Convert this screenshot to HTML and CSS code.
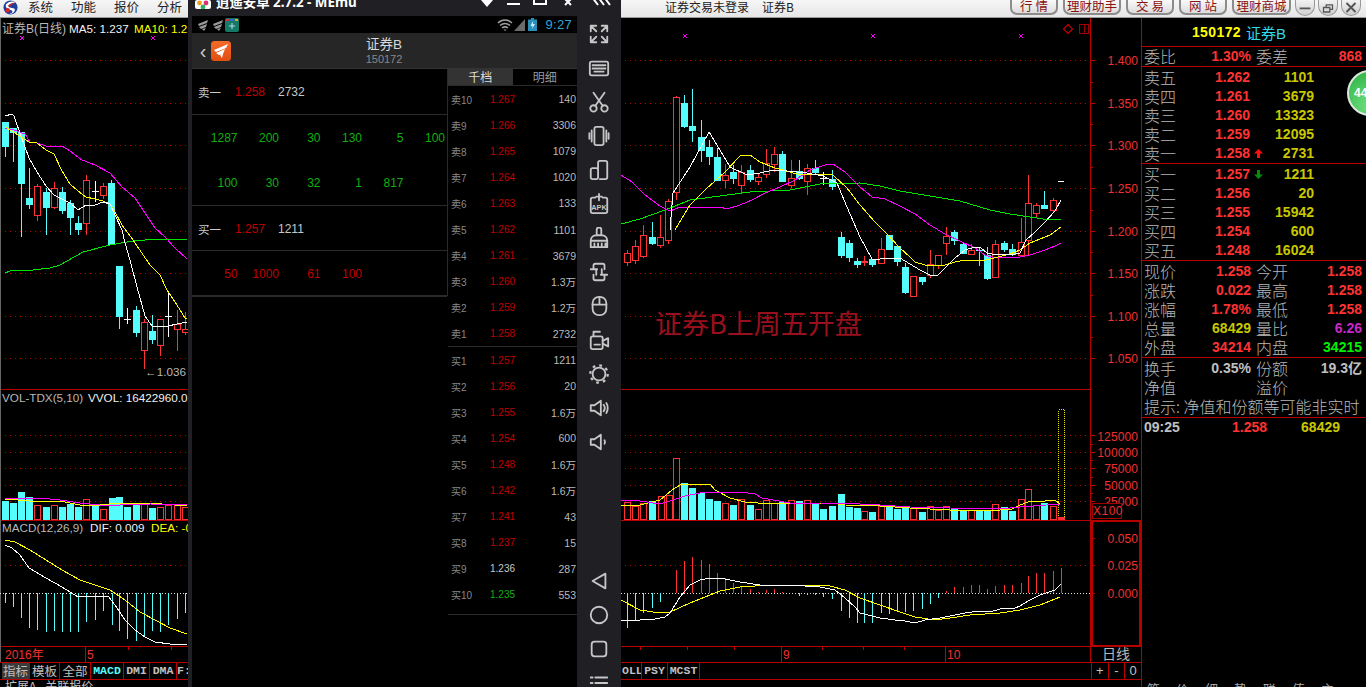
FILE: index.html
```html
<!DOCTYPE html>
<html lang="zh-CN">
<head>
<meta charset="utf-8">
<title>证券B</title>
<link rel="stylesheet" href="styles.css">
</head>
<body>
<div class="app">
  <header class="menubar">
    <div class="menu-left">
      <svg class="logo" viewBox="0 0 16 16"><circle cx="8" cy="8" r="7.5" fill="#1d3f9e"/><path d="M3 5c3-4 8-4 10-2-3 0-6 1-7 3s3 2 6 3c2 2-1 6-5 6 3-1 4-3 2-4S2 9 3 5z" fill="#fff"/><path d="M5 7c1-2 5-4 8-4-2 1-4 2-5 3z" fill="#e02020"/><circle cx="5" cy="11" r="2.4" fill="#e02020"/></svg>
      <span class="menu-item">系统</span><span class="menu-item">功能</span><span class="menu-item">报价</span><span class="menu-item">分析</span>
    </div>
    <div class="menu-title"><span>证券交易未登录</span><span>证券B</span></div>
    <nav class="menu-btns">
      <span class="mbtn w48">行 情</span><span class="mbtn w58">理财助手</span><span class="mbtn w48">交 易</span><span class="mbtn w48">网 站</span><span class="mbtn w59">理财商城</span>
    </nav>
    <div class="win-btns">
      <span class="wbtn"><svg viewBox="0 0 20 16"><path d="M4 9h12" stroke="#555" stroke-width="2"/></svg></span>
      <span class="wbtn"><svg viewBox="0 0 20 16"><path d="M5 8h7v5H5zM8 8V5h7v5h-3" fill="none" stroke="#555" stroke-width="1.4"/></svg></span>
      <span class="wbtn"><svg viewBox="0 0 20 16"><path d="M5 3l10 10M15 3L5 13" stroke="#555" stroke-width="2.2"/></svg></span>
    </div>
  </header>

  <div class="workspace">
    <main class="charts">
      <svg id="chart" class="chart-svg" viewBox="0 18 1141 644" width="1141" height="644">
        <g id="grid"></g>
        <g id="plots"></g>
        <g class="t-gray">
          <text x="2" y="33" class="t-cjk">证券B(日线)</text>
          <text x="2" y="402">VOL-TDX(5,10)</text>
          <text x="2" y="532">MACD(12,26,9)</text>
          <text x="145" y="376">←1.036</text>
        </g>
        <g class="t-white">
          <text x="69" y="33">MA5: 1.237</text>
          <text x="88" y="402">VVOL: 16422960.0</text>
          <text x="90" y="532">DIF: 0.009</text>
        </g>
        <g class="t-yellow">
          <text x="134" y="33">MA10: 1.2</text>
          <text x="151" y="532">DEA: -0</text>
        </g>
        <g class="t-axis">
          <text x="1138" y="65">1.400</text><text x="1138" y="108">1.350</text><text x="1138" y="150">1.300</text><text x="1138" y="193">1.250</text>
          <text x="1138" y="236">1.200</text><text x="1138" y="278">1.150</text><text x="1138" y="321">1.100</text><text x="1138" y="363">1.050</text>
          <text x="1138" y="441">125000</text><text x="1138" y="457">100000</text><text x="1138" y="473">75000</text><text x="1138" y="490">50000</text><text x="1138" y="506">25000</text>
          <text x="1138" y="543">0.050</text><text x="1138" y="570">0.025</text><text x="1138" y="598">0.000</text>
        </g>
        <rect class="x100-box" x="1092.5" y="503.5" width="29" height="15"/>
        <text class="t-axis-start" x="1093" y="515">X100</text>
        <g class="t-date">
          <text x="5" y="659">2016年</text><text x="87" y="659">5</text><text x="783" y="659">9</text><text x="947" y="659">10</text>
        </g>
        <text class="t-period" x="1116" y="659">日线</text>
        <text class="t-note" x="655" y="334">证券B上周五开盘</text>
        <path class="mark" d="M1068 24.500l4.500 4.500-4.500 4.500-4.500-4.500zM1079.500 24.500h9v9h-9zM1084.500 24.500v9"/>
      </svg>
      <div class="tabstrip">
        <div class="tabs-left">
          <span class="tab cjk active w28">指标</span><span class="tab cjk w30">模板</span><span class="tab cjk w31">全部</span><span class="tab mono cyan w33">MACD</span><span class="tab mono w26">DMI</span><span class="tab mono w27">DMA</span><span class="tab mono w13">F:</span>
        </div>
        <div class="tabs-main">
          <span class="tab mono w20">OLL</span><span class="tab mono w26">PSY</span><span class="tab mono w32">MCST</span>
        </div>
        <div class="tabs-zoom"><span class="zbtn">+</span><span class="zbtn">-</span><span class="zbtn">0</span></div>
      </div>
      <div class="subtabs"><span>扩展A</span><span>关联报价</span></div>
    </main>

    <aside class="panel">
      <div class="p-head"><span class="yellow">150172</span><span class="cyan-t">证券B</span></div>
      <div class="p-ratio">
        <span class="lab">委比</span><span class="num red">1.30%</span><span class="lab">委差</span><span class="num red">868</span>
      </div>
      <div class="book">
        <div class="b-row"><span class="lab">卖五</span><span class="num red">1.262</span><span></span><span class="num olive">1101</span></div>
        <div class="b-row"><span class="lab">卖四</span><span class="num red">1.261</span><span></span><span class="num olive">3679</span></div>
        <div class="b-row"><span class="lab">卖三</span><span class="num red">1.260</span><span></span><span class="num olive">13323</span></div>
        <div class="b-row"><span class="lab">卖二</span><span class="num red">1.259</span><span></span><span class="num olive">12095</span></div>
        <div class="b-row"><span class="lab">卖一</span><span class="num red">1.258</span><svg class="arrow" viewBox="0 0 9 9"><path d="M4.500 0L9 4.500H6V9H3V4.500H0z" fill="#ff1010"/></svg><span class="num olive">2731</span></div>
      </div>
      <div class="book">
        <div class="b-row"><span class="lab">买一</span><span class="num red">1.257</span><svg class="arrow" viewBox="0 0 9 9"><path d="M4.500 9L9 4.500H6V0H3V4.500H0z" fill="#0a8a0a"/></svg><span class="num olive">1211</span></div>
        <div class="b-row"><span class="lab">买二</span><span class="num red">1.256</span><span></span><span class="num olive">20</span></div>
        <div class="b-row"><span class="lab">买三</span><span class="num red">1.255</span><span></span><span class="num olive">15942</span></div>
        <div class="b-row"><span class="lab">买四</span><span class="num red">1.254</span><span></span><span class="num olive">600</span></div>
        <div class="b-row"><span class="lab">买五</span><span class="num red">1.248</span><span></span><span class="num olive">16024</span></div>
      </div>
      <div class="book">
        <div class="s-row"><span class="lab">现价</span><span class="num red">1.258</span><span class="lab">今开</span><span class="num red">1.258</span></div>
        <div class="s-row"><span class="lab">涨跌</span><span class="num red">0.022</span><span class="lab">最高</span><span class="num red">1.258</span></div>
        <div class="s-row"><span class="lab">涨幅</span><span class="num red">1.78%</span><span class="lab">最低</span><span class="num red">1.258</span></div>
        <div class="s-row"><span class="lab">总量</span><span class="num olive">68429</span><span class="lab">量比</span><span class="num purple">6.26</span></div>
        <div class="s-row"><span class="lab">外盘</span><span class="num red">34214</span><span class="lab">内盘</span><span class="num green">34215</span></div>
      </div>
      <div class="book extra">
        <div class="s-row"><span class="lab">换手</span><span class="num gray">0.35%</span><span class="lab">份额</span><span class="num gray">19.3亿</span></div>
        <div class="s-row"><span class="lab">净值</span><span></span><span class="lab">溢价</span><span></span></div>
        <div class="tip">提示: 净值和份额等可能非实时</div>
      </div>
      <div class="t-row"><span class="num gray">09:25</span><span class="num red">1.258</span><span class="num olive">68429</span></div>
      <div class="p-tabs"><span>笔</span><span>价</span><span>细</span><span>势</span><span>联</span><span>值</span><span>主</span></div>
      <div class="bubble">44</div>
    </aside>
  </div>

  <section class="emu">
    <div class="emu-title">
      <svg class="emu-ico" viewBox="0 0 16 9"><rect width="16" height="9" rx="2" fill="#fff"/><circle cx="4.500" cy="3" r="2.400" fill="#f0a020"/><circle cx="11" cy="3" r="2.400" fill="#e03070"/><circle cx="8" cy="7" r="2.400" fill="#30b060"/></svg>
      <span class="emu-name">逍遥安卓 2.7.2 - MEmu</span>
      <svg class="emu-ctl" viewBox="0 0 140 16"><path d="M1 0h12L7 7z" fill="#fff"/><path d="M27 4h13" stroke="#fff" stroke-width="2"/><path d="M54 -4h12v8H54z" fill="none" stroke="#fff" stroke-width="2"/><path d="M84 -2l7 7M92 -2l-7 7" stroke="#fff" stroke-width="2"/><path d="M112 -3l6 8M118 -3l6 8M124 -3l6 8" stroke="#fff" stroke-width="2" fill="none"/></svg>
    </div>
    <div class="emu-body">
      <div class="screen">
        <div class="status">
          <svg class="st-fan" viewBox="0 0 11 12"><path d="M0 5l10-4-1 3-8 3zm1 3l8-3-1 3-5 2zm3 2l4-1-2 3z" fill="#9a9a9a"/></svg>
          <svg class="st-fan" viewBox="0 0 11 12"><path d="M0 5l10-4-1 3-8 3zm1 3l8-3-1 3-5 2zm3 2l4-1-2 3z" fill="#9a9a9a"/></svg>
          <svg class="st-app" viewBox="0 0 14 14"><rect width="14" height="14" rx="2" fill="#157a68"/><path d="M1 1h3v2H1z" fill="#c33"/><path d="M5 1h4v2H5z" fill="#36c"/><path d="M10 1h3v2h-3z" fill="#e6a020"/><path d="M7 5v6M4 8h6" stroke="#bde" stroke-width="1"/></svg>
          <span class="st-space"></span>
          <svg class="st-wifi" viewBox="0 0 16 12"><path d="M1 4c4-4 10-4 14 0M3 6.500c3-2.500 7-2.500 10 0M5 9c2-1.500 4-1.500 6 0" fill="none" stroke="#a0a0a0" stroke-width="1.500"/><path d="M6.500 10.500h3L8 12z" fill="#a0a0a0"/></svg>
          <svg class="st-sig" viewBox="0 0 11 12"><path d="M0 12L11 0v12z" fill="#6a6a6a"/></svg>
          <svg class="st-bat" viewBox="0 0 9 13"><path d="M3 0h3v1.500h3V13H0V1.500h3z" fill="#2a8fb8"/><path d="M5 3L2.500 8h2L4 11l3-5H5z" fill="#cef"/></svg>
          <span class="st-time">9:27</span>
        </div>
        <div class="app-head">
          <span class="back">‹</span>
          <svg class="app-logo" viewBox="0 0 20 20"><defs><linearGradient id="lg" x1="0" y1="0" x2="0" y2="1"><stop offset="0" stop-color="#f56a2a"/><stop offset="1" stop-color="#e04e10"/></linearGradient></defs><rect width="20" height="20" rx="3.500" fill="url(#lg)"/><path d="M3 9L17 3l-2 4-10 4zm2 3l9-4-2 5-4 1zm4 2l3-1-1 4z" fill="#fff"/></svg>
          <div class="app-title"><span class="at-name">证券B</span><span class="at-code">150172</span></div>
        </div>
        <div class="quote">
          <div class="q-left">
            <div class="q-row q-main"><span class="q-lab">卖一</span><span class="q-price">1.258</span><span>2732</span></div>
            <div class="q-row q-grid g-green"><span>1287</span><span>200</span><span>30</span><span>130</span><span>5</span><span>100</span></div>
            <div class="q-row q-grid g-green q-end"><span>100</span><span>30</span><span>32</span><span>1</span><span>817</span><span></span></div>
            <div class="q-row q-main"><span class="q-lab">买一</span><span class="q-price">1.257</span><span>1211</span></div>
            <div class="q-row q-grid g-red q-end"><span>50</span><span>1000</span><span>61</span><span>100</span><span></span><span></span></div>
          </div>
          <div class="q-depth">
            <div class="d-tabs"><span class="d-tab on">千档</span><span class="d-tab">明细</span></div>
            <div class="d-list">
              <div class="d-row"><span>卖10</span><b>1.267</b><i>140</i></div>
              <div class="d-row"><span>卖9</span><b>1.266</b><i>3306</i></div>
              <div class="d-row"><span>卖8</span><b>1.265</b><i>1079</i></div>
              <div class="d-row"><span>卖7</span><b>1.264</b><i>1020</i></div>
              <div class="d-row"><span>卖6</span><b>1.263</b><i>133</i></div>
              <div class="d-row"><span>卖5</span><b>1.262</b><i>1101</i></div>
              <div class="d-row"><span>卖4</span><b>1.261</b><i>3679</i></div>
              <div class="d-row"><span>卖3</span><b>1.260</b><i>1.3万</i></div>
              <div class="d-row"><span>卖2</span><b>1.259</b><i>1.2万</i></div>
              <div class="d-row"><span>卖1</span><b>1.258</b><i>2732</i></div>
            </div>
            <div class="d-list d-buy">
              <div class="d-row"><span>买1</span><b>1.257</b><i>1211</i></div>
              <div class="d-row"><span>买2</span><b>1.256</b><i>20</i></div>
              <div class="d-row"><span>买3</span><b>1.255</b><i>1.6万</i></div>
              <div class="d-row"><span>买4</span><b>1.254</b><i>600</i></div>
              <div class="d-row"><span>买5</span><b>1.248</b><i>1.6万</i></div>
              <div class="d-row"><span>买6</span><b>1.242</b><i>1.6万</i></div>
              <div class="d-row"><span>买7</span><b>1.241</b><i>43</i></div>
              <div class="d-row"><span>买8</span><b>1.237</b><i>15</i></div>
              <div class="d-row"><span>买9</span><b class="flat">1.236</b><i>287</i></div>
              <div class="d-row"><span>买10</span><b class="down">1.235</b><i>553</i></div>
            </div>
          </div>
        </div>
      </div>
      <div class="sidebar">
        <svg class="ico" viewBox="0 0 24 24"><path d="M3 9V3h6M3 3l6 6M21 9V3h-6M21 3l-6 6M3 15v6h6M3 21l6-6M21 15v6h-6M21 21l-6-6"/></svg>
        <svg class="ico" viewBox="0 0 24 24"><rect x="2" y="5" width="20" height="15" rx="2"/><path d="M5 9h14M5 12.500h14" stroke-dasharray="2 1"/><path d="M7 16h10"/></svg>
        <svg class="ico" viewBox="0 0 24 24"><circle cx="6" cy="19" r="3.500"/><circle cx="18" cy="19" r="3.500"/><path d="M8 16L18 2M16 16L6 2"/></svg>
        <svg class="ico" viewBox="0 0 24 24"><rect x="7" y="2" width="10" height="20" rx="2"/><path d="M4 6v12M20 6v12M1.500 9v6M22.500 9v6"/></svg>
        <svg class="ico" viewBox="0 0 24 24"><path d="M11 10V4a2 2 0 0 1 2-2h6a2 2 0 0 1 2 2v16a2 2 0 0 1-2 2h-6"/><rect x="3" y="10" width="8" height="12" rx="2"/></svg>
        <svg class="ico" viewBox="0 0 24 24"><path d="M8 5H5a2 2 0 0 0-2 2v13a2 2 0 0 0 2 2h14a2 2 0 0 0 2-2V7a2 2 0 0 0-2-2h-3M12 1v7M9 4h6"/><text x="12" y="18" class="apk">APK</text></svg>
        <svg class="ico" viewBox="0 0 24 24"><path d="M9.500 9V3a2.500 2.500 0 0 1 5 0v6M3 15c0-4 3-6 6-6h6c3 0 6 2 6 6v7H3zM3 15h18M7 22v-4M11 22v-4M15 22v-4M19 22v-4"/></svg>
        <svg class="ico" viewBox="0 0 24 24"><path d="M6 9V5a2 2 0 0 1 2-2h8a2 2 0 0 1 2 2v4M3 9h7M14 15h7M6 15v4a2 2 0 0 0 2 2h8a2 2 0 0 0 2-2v-4M9 9v6M15 9v6"/></svg>
        <svg class="ico" viewBox="0 0 24 24"><rect x="5" y="2" width="15" height="20" rx="7"/><path d="M12.500 2v8M5 10.500h15"/></svg>
        <svg class="ico" viewBox="0 0 24 24"><rect x="3" y="8" width="13" height="14" rx="2"/><path d="M6 8V3h7M7 17h6M16 13l6-3v9l-6-3"/></svg>
        <svg class="ico" viewBox="0 0 24 24"><circle cx="12" cy="12" r="7"/><circle class="teeth" cx="12" cy="12" r="9.500"/></svg>
        <svg class="ico" viewBox="0 0 24 24"><path d="M3 9v6h4l7 5V4L7 9zM17 8.500c1.500 2 1.500 5 0 7M20 6.500c2 3 2 8 0 11"/></svg>
        <svg class="ico" viewBox="0 0 24 24"><path d="M3 9v6h4l7 5V4L7 9zM18 10c.8 1.300.8 2.700 0 4"/></svg>
        <div class="side-gap"></div>
        <svg class="ico" viewBox="0 0 24 24"><path d="M5 12L19 4v16z"/></svg>
        <svg class="ico" viewBox="0 0 24 24"><circle cx="12" cy="12" r="9"/></svg>
        <svg class="ico" viewBox="0 0 24 24"><rect x="4" y="4" width="16" height="16" rx="3"/></svg>
        <svg class="ico" viewBox="0 0 24 24"><path d="M3 6h2M8 6h13M3 12h2M8 12h13M3 18h2M8 18h13"/></svg>
      </div>
    </div>
  </section>
</div>
<script src="chart.js"></script>
</body>
</html>
```

FILE: styles.css
```css
* { box-sizing: border-box; }
html, body { margin: 0; height: 100%; background: #000; overflow: hidden; }
body { font-family: "Liberation Sans", "Noto Sans CJK SC", sans-serif; }
.app { width: 1366px; height: 687px; position: relative; overflow: hidden; display: flex; flex-direction: column; }

/* top bar */
.menubar { height: 18px; flex: none; display: flex; background: linear-gradient(#f6f6f6, #e6e6e6); border-bottom: 1px solid #999; overflow: hidden; font-size: 12px; line-height: 13px; color: #222; font-family: "Noto Sans CJK SC", sans-serif; }
.menu-left { width: 665px; display: flex; padding-left: 3px; }
.logo { width: 15px; height: 15px; margin-right: 10px; flex: none; }
.menu-item { width: 43px; flex: none; font-size: 12.500px; }
.menu-title { width: 345px; display: flex; gap: 13px; }
.menu-btns { display: flex; gap: 5px; }
.mbtn { height: 15px; border: 1px solid #8c8c8c; border-top: 0; border-width: 0 2px 2px; border-radius: 0 0 7px 7px; background: linear-gradient(#fafafa, #dcdcdc); color: #8a1414; text-align: center; font-size: 12.500px; line-height: 12px; }
.w48 { width: 48px; } .w58 { width: 58px; } .w59 { width: 59px; }
.win-btns { display: flex; gap: 3px; margin-left: 4px; }
.wbtn { width: 20px; height: 16px; border: 1px solid #999; border-top: 0; border-radius: 0 0 10px 10px; background: linear-gradient(#f2f2f2, #cfcfcf); }
.wbtn svg { display: block; width: 18px; height: 15px; }

/* charts */
.workspace { flex: 1; display: flex; min-height: 0; }
.charts { width: 1141px; flex: none; display: flex; flex-direction: column; }
.chart-svg { display: block; flex: none; font-family: "Liberation Sans", "Noto Sans CJK SC", sans-serif; }
.dot { stroke: #b80000; stroke-width: 1; stroke-dasharray: 1 4; fill: none; shape-rendering: crispEdges; }
.zero { stroke: #e0e0e0; stroke-width: 1; stroke-dasharray: 1 2; fill: none; shape-rendering: crispEdges; }
.rule { stroke: #b80000; stroke-width: 1; fill: none; shape-rendering: crispEdges; }
.edge { stroke: #666; stroke-width: 1; shape-rendering: crispEdges; }
.frame { stroke: #b80000; stroke-width: 2; fill: none; shape-rendering: crispEdges; }
.line { fill: none; stroke-width: 1; shape-rendering: crispEdges; }
.l-w { stroke: #fff; } .l-y { stroke: #ffff00; } .l-m { stroke: #ff00ff; } .l-g { stroke: #00e600; }
.w-up { stroke: #ff3232; } .w-dn { stroke: #54fcfc; } .w-wh { stroke: #fff; }
.b-up { fill: #000; stroke: #ff3232; shape-rendering: crispEdges; }
.b-dn { fill: #54fcfc; shape-rendering: crispEdges; }
.box-y { fill: none; stroke: #e6e600; stroke-dasharray: 1 1; shape-rendering: crispEdges; }
.b-red { fill: #ff3232; shape-rendering: crispEdges; }
.wick { shape-rendering: crispEdges; stroke-width: 1; }
.t-gray text, .t-white text, .t-yellow text { font-size: 11.700px; }
.t-gray text.t-cjk { font-size: 12px; }
.t-gray { fill: #b8b8b8; } .t-white { fill: #f0f0f0; } .t-yellow { fill: #ffff00; }
.t-axis { fill: #f03030; font-size: 12px; text-anchor: end; letter-spacing: .1px; }
.x100-box { fill: #000; stroke: #a00000; shape-rendering: crispEdges; }
.t-axis-start { fill: #f03030; font-size: 12px; letter-spacing: .5px; }
.t-date { fill: #f03030; font-size: 12px; }
.t-period { fill: #b8b8b8; font-size: 14px; text-anchor: middle; font-family: "Noto Sans CJK SC", sans-serif; }
.t-note { fill: #98101e; font-size: 27px; font-family: "Noto Sans CJK SC", sans-serif; }
.mark { fill: none; stroke: #a00000; shape-rendering: crispEdges; }

/* bottom strips */
.tabstrip { height: 18px; flex: none; display: flex; border-top: 1px solid #b80000; border-bottom: 1px solid #b80000; }
.tabs-left { width: 622px; display: flex; padding-left: 2px; flex: none; }
.tabs-main { width: 469px; flex: none; display: flex; }
.tabs-zoom { flex: 1; display: flex; }
.tab { height: 16px; border-right: 1px solid #b80000; color: #c0c0c0; text-align: center; overflow: hidden; flex: none; white-space: nowrap; }
.cjk { font-size: 12.500px; line-height: 16px; font-family: "Noto Sans CJK SC", sans-serif; }
.mono { font-size: 11.500px; line-height: 16px; font-family: "Liberation Mono", monospace; font-weight: 700; }
.cyan { color: #54fcfc; }
.active { background: #3a3a3a; }
.w28 { width: 28px; } .w30 { width: 30px; } .w31 { width: 31px; } .w33 { width: 33px; } .w26 { width: 26px; } .w27 { width: 27px; } .w13 { width: 13px; } .w20 { width: 20px; } .w32 { width: 32px; }
.zbtn { flex: 1; height: 16px; border-left: 1px solid #b80000; color: #c0c0c0; text-align: center; font-size: 13px; line-height: 15px; }
.subtabs { flex: 1; display: flex; gap: 9px; padding-left: 5px; overflow: hidden; color: #c0c0c0; font-size: 12px; line-height: 12px; font-family: "Noto Sans CJK SC", sans-serif; }

/* right panel */
.panel { flex: 1; min-width: 0; display: flex; flex-direction: column; position: relative; border-left: 1px solid #b80000; overflow: hidden; }
.lab { color: #b8b8b8; font-size: 16px; line-height: 19px; font-weight: 300; font-family: "Noto Sans CJK SC", sans-serif; }
.num { font-size: 14px; line-height: 19px; font-weight: 700; text-align: right; }
.red { color: #ff3232; } .olive { color: #c8c800; } .purple { color: #c828c8; } .green { color: #00f000; } .gray { color: #c0c0c0; } .yellow { color: #ffff00; } .cyan-t { color: #32d8e8; }
.p-head { height: 29px; flex: none; border-bottom: 1px solid #b80000; display: flex; justify-content: center; align-items: center; gap: 5px; padding-right: 30px; font-size: 14px; font-weight: 700; letter-spacing: .4px; }
.p-head .cyan-t { font-weight: 400; font-size: 15px; letter-spacing: 0; }
.p-ratio { height: 20px; flex: none; display: grid; grid-template-columns: 32px 75px 5px 32px 74px; border-bottom: 1px solid #b80000; padding-left: 2px; }
.p-ratio > :nth-child(3) { grid-column: 4; }
.p-ratio > :nth-child(4) { grid-column: 5; }
.book { height: 97px; flex: none; padding: 1px 0 0 2px; border-bottom: 1px solid #b80000; }
.book.extra { height: 60px; }
.b-row { height: 19px; display: grid; grid-template-columns: 32px 74px 16px 48px; align-items: center; }
.arrow { width: 9px; height: 9px; margin-left: 4px; }
.s-row { height: 19px; display: grid; grid-template-columns: 32px 75px 5px 32px 74px; }
.s-row > :nth-child(3) { grid-column: 4; }
.s-row > :nth-child(4) { grid-column: 5; }
.tip { color: #b8b8b8; font-size: 16px; line-height: 19px; font-weight: 300; white-space: nowrap; font-family: "Noto Sans CJK SC", sans-serif; }
.t-row { height: 19px; flex: none; display: grid; grid-template-columns: 40px 83px 73px; padding-left: 2px; }
.t-row .num:first-child { text-align: left; }
.p-tabs { margin-top: auto; height: 6px; display: flex; gap: 16px; padding-left: 5px; color: #aaa; font-size: 13px; line-height: 16px; overflow: hidden; font-family: "Noto Sans CJK SC", sans-serif; }
.bubble { position: absolute; left: 205px; top: 52px; width: 46px; height: 46px; padding-left: 5px; border-radius: 50%; border: 2px solid #dfe8df; background: radial-gradient(circle at 50% 80%, #70e080, #2ab040); color: #fff; font-size: 12px; font-weight: 700; line-height: 42px; }

/* emulator window */
.emu { position: absolute; left: 188px; top: 0; width: 433px; height: 687px; background: #1f1f24; display: flex; flex-direction: column; overflow: hidden; }
.emu-title { height: 16px; flex: none; display: flex; padding-left: 7px; overflow: hidden; }
.emu-ico { width: 16px; height: 9px; flex: none; }
.emu-name { margin: -6px 0 0 5px; color: #fff; font-size: 13.400px; font-weight: 700; line-height: 16px; white-space: nowrap; width: 264px; font-family: "Noto Sans", "Noto Sans CJK SC", sans-serif; }
.emu-ctl { width: 140px; height: 16px; flex: none; }
.emu-body { flex: 1; display: flex; min-height: 0; padding-left: 4px; }
.screen { width: 385px; flex: none; display: flex; flex-direction: column; background: #000; }
.status { height: 17px; flex: none; display: flex; align-items: center; padding-left: 6px; }
.st-fan { width: 11px; height: 12px; margin-right: 4px; }
.st-fan + .st-fan { margin-right: 1px; }
.st-app { width: 14px; height: 14px; }
.st-space { flex: 1; }
.st-wifi { width: 16px; height: 12px; }
.st-sig { width: 11px; height: 12px; margin-left: 1px; }
.st-bat { width: 9px; height: 13px; margin-left: 3px; }
.st-time { color: #33a5d5; font-size: 13px; margin: 0 5px 0 8px; line-height: 17px; letter-spacing: .3px; }
.app-head { height: 36px; flex: none; background: #262626; display: grid; grid-template-columns: 19px 20px 1fr 40px; align-items: center; border-bottom: 1px solid #333; }
.back { color: #ccc; font-size: 20px; text-align: center; line-height: 24px; padding-left: 3px; }
.app-logo { width: 20px; height: 20px; }
.app-title { display: flex; flex-direction: column; align-items: center; }
.at-name { color: #d8d8d8; font-size: 13.500px; line-height: 17px; }
.at-code { color: #888; font-size: 11px; line-height: 12px; }
.quote { flex: 1; display: flex; min-height: 0; }
.q-left { width: 256px; height: 227px; flex: none; border-right: 1px solid #2a2a2a; border-bottom: 1px solid #2a2a2a; }
.q-row { height: 45.500px; padding-top: 2px; font-size: 12px; display: grid; align-items: center; }
.q-main { grid-template-columns: 37px 43px 1fr; padding-left: 6px; color: #c8c8c8; border-bottom: 1px solid #2a2a2a; }
.q-lab { font-size: 11.500px; font-family: "Noto Sans CJK SC", sans-serif; }
.q-price { color: #c00000; }
.q-grid { grid-template-columns: repeat(6, 41.500px); padding-left: 4px; text-align: right; }
.q-end { border-bottom: 1px solid #2a2a2a; }
.g-green { color: #10b010; }
.g-red { color: #c00000; }
.q-depth { flex: 1; min-width: 0; display: flex; flex-direction: column; }
.d-tabs { height: 17px; flex: none; display: flex; border-bottom: 1px solid #2a2a2a; }
.d-tab { flex: 1; color: #999; text-align: center; font-size: 12px; line-height: 16px; font-family: "Noto Sans CJK SC", sans-serif; }
.d-tab.on { background: #333; color: #ddd; }
.d-list { height: 261px; flex: none; border-bottom: 1px solid #2a2a2a; }
.d-buy { height: 268px; }
.d-row { height: 26.100px; display: grid; grid-template-columns: 39px 50px 36px; align-items: center; padding-left: 3px; font-size: 10px; color: #888; }
.d-row b { color: #c00000; font-weight: 400; }
.d-row b.flat { color: #c8c8c8; }
.d-row b.down { color: #10b010; }
.d-row i { color: #bbb; font-style: normal; text-align: right; font-size: 10.500px; }
.sidebar { flex: 1; display: flex; flex-direction: column; align-items: center; padding-top: 1px; overflow: hidden; }
.ico { width: 22px; height: 22px; margin: 6px 0; flex: none; fill: none; stroke: #c6c6c6; stroke-width: 2; stroke-linejoin: round; stroke-linecap: round; }
.apk { fill: #c6c6c6; stroke: none; font-size: 8px; font-weight: 700; text-anchor: middle; }
.teeth { stroke-width: 2.500; stroke-dasharray: 3 4.460; stroke-linecap: butt; }
.side-gap { height: 105px; flex: none; }
```

FILE: chart.js
```js
(function () {
  var NS = 'http://www.w3.org/2000/svg';
  var plots = document.getElementById('plots');
  var grid = document.getElementById('grid');
  function el(tag, attrs, parent) {
    var n = document.createElementNS(NS, tag);
    for (var k in attrs) n.setAttribute(k, attrs[k]);
    (parent || plots).appendChild(n);
    return n;
  }
  function vline(x, y1, y2, cls, p) { el('line', { x1: x + .5, x2: x + .5, y1: y1, y2: y2, 'class': cls }, p); }
  function hline(y, x1, x2, cls, p) { el('line', { x1: x1, x2: x2, y1: y + .5, y2: y + .5, 'class': cls }, p); }

  /* grid */
  [60, 103, 145, 188, 231, 273, 316, 358, 435, 452, 468, 485, 501, 565].forEach(function (y) { hline(y, 0, 1090, 'dot', grid); });
  hline(389, 0, 1090, 'rule', grid);
  hline(520, 0, 1090, 'rule', grid);
  hline(646, 0, 1141, 'rule', grid);
  vline(0, 18, 662, 'edge', grid);
  vline(1090, 18, 662, 'rule', grid);
  vline(85, 646, 662, 'rule', grid);
  vline(781, 646, 662, 'rule', grid);
  vline(945, 646, 662, 'rule', grid);
  [128, 171, 640, 687, 734, 822, 863, 904].forEach(function (x) { vline(x, 646, 650, 'rule', grid); });
  el('rect', { x: 1092, y: 521, width: 48, height: 125, 'class': 'frame' }, grid);
  [[60, 5], [82, 3], [103, 5], [124, 3], [145, 5], [167, 3], [188, 5], [210, 3], [231, 5], [252, 3], [273, 5], [295, 3], [316, 5], [337, 3], [358, 5],
   [435, 5], [444, 3], [452, 5], [460, 3], [468, 5], [477, 3], [485, 5], [493, 3], [501, 5], [538, 5], [552, 3], [565, 5], [579, 3], [593, 5]].forEach(function (t) {
    hline(t[0], 1090, 1090 + t[1], 'rule', grid);
  });
  hline(593, 0, 1090, 'zero', grid);

  /* [centre, high, bodyTop, bodyBottom, low, type] u=up d=down w=doji */
  var candles = [
    [5,122,122,146,157,'d'],[13,128,128,132,162,'d'],[21,132,132,183,237,'d'],[29,168,198,204,209,'d'],[37,184,186,215,221,'u'],
    [46,188,192,207,235,'d'],[54,182,188,207,209,'u'],[62,187,192,210,214,'d'],[70,200,203,217,235,'d'],[78,216,223,229,235,'d'],
    [86,175,180,223,235,'u'],[95,181,191,191,202,'w'],[103,183,186,195,199,'u'],[111,180,183,244,244,'d'],[119,266,266,316,329,'d'],
    [127,308,319,319,324,'w'],[136,306,310,332,337,'d'],[144,319,322,350,369,'u'],[152,315,331,339,344,'d'],[160,319,319,345,356,'u'],
    [168,293,316,316,337,'w'],[177,310,324,329,351,'u'],[185,312,329,332,335,'u'],
    [627,250,253,262,266,'u'],[635,240,246,260,264,'u'],[643,225,235,256,258,'u'],[652,222,237,243,245,'d'],[660,215,237,245,248,'u'],[668,199,201,240,244,'u'],
    [676,96,97,192,200,'u'],[684,95,103,126,128,'d'],[692,89,126,130,142,'d'],[701,120,137,150,162,'d'],[709,140,147,156,165,'d'],[717,148,157,180,180,'d'],
    [725,164,175,180,188,'u'],[733,165,172,178,184,'d'],[741,165,172,185,194,'u'],[750,165,170,179,182,'d'],[758,173,177,181,185,'u'],[766,149,163,174,178,'u'],
    [774,147,154,164,172,'u'],[782,151,154,181,181,'d'],[791,160,178,185,188,'u'],[799,160,171,178,180,'d'],[807,164,168,181,195,'u'],[815,160,168,172,175,'d'],
    [823,172,178,178,185,'w'],[832,170,179,186,190,'d'],[841,232,237,255,258,'d'],[849,240,243,257,262,'d'],[857,258,261,264,268,'d'],[864,256,261,261,266,'r'],
    [872,259,259,264,267,'d'],[881,238,249,263,264,'u'],[889,235,235,249,249,'d'],[897,246,246,261,266,'d'],[905,263,267,292,294,'d'],[913,276,276,296,296,'u'],
    [922,277,277,281,285,'d'],[930,250,264,275,278,'u'],[938,255,255,265,269,'u'],[946,227,236,243,255,'u'],[954,230,232,240,245,'d'],[963,242,244,253,253,'d'],
    [971,244,250,254,255,'u'],[979,247,250,250,266,'d'],[987,247,255,278,280,'d'],[995,240,244,277,278,'u'],[1004,241,243,249,252,'d'],[1012,244,249,254,256,'d'],
    [1021,218,242,255,255,'u'],[1028,175,203,240,255,'u'],[1036,203,205,213,217,'u'],[1044,191,205,208,209,'d'],[1053,198,200,210,212,'u']
  ];
  candles.forEach(function (c) {
    var x = c[0], t = c[5];
    var wc = t === 'u' || t === 'r' ? 'wick w-up' : t === 'd' ? 'wick w-dn' : 'wick w-wh';
    vline(x, c[1], c[4], wc);
    if (t === 'u') el('rect', { x: x - 2.5, y: c[2] + .5, width: 6, height: c[3] - c[2], 'class': 'b-up' });
    else if (t === 'd') el('rect', { x: x - 3, y: c[2], width: 7, height: c[3] - c[2] + 1, 'class': 'b-dn' });
    else { hline(c[2], x - 3, x + 4, wc); if (t === 'r') hline(c[2] + 1, x - 3, x + 4, wc); }
  });
  hline(181, 1058, 1064, 'wick w-wh');

  /* volume [centre, top, up?] */
  var vols = [
    [5,501,0],[13,503,0],[21,492,0],[29,497,0],[37,505,1],[46,507,0],[54,505,1],[62,507,0],[70,504,0],[78,507,0],[86,499,1],[95,505,0],[103,509,1],[112,498,0],[119,497,0],[127,507,0],[136,505,0],[144,504,1],[152,508,0],[160,507,1],[168,505,1],[177,505,1],[185,507,1],
    [627,502,1],[635,506,1],[643,503,1],[652,501,0],[661,496,1],[669,495,1],[676,458,1],[684,483,0],[692,488,0],[701,493,0],[709,499,0],[717,501,0],[725,503,1],[733,505,0],[741,499,1],[750,505,0],[758,509,1],[766,500,1],[774,503,1],[782,502,0],[791,500,1],[799,501,0],[807,500,1],[815,503,0],[823,509,0],[832,506,0],[841,494,0],[849,507,0],[857,508,0],
    [864,511,1],[872,512,0],[881,506,1],[889,507,0],[897,509,0],[905,508,0],[913,508,1],[922,512,0],[930,506,1],[938,510,1],[946,506,1],[954,509,0],[963,510,0],[971,510,1],[979,510,0],[987,510,0],[995,504,1],[1004,507,0],[1012,511,0],[1021,499,1],[1028,489,1],[1036,505,1],[1044,503,0],[1053,506,1]
  ];
  vols.forEach(function (v) {
    if (v[2]) el('rect', { x: v[0] - 2.5, y: v[1] + .5, width: 6, height: 519 - v[1], 'class': 'b-up' });
    else el('rect', { x: v[0] - 3, y: v[1], width: 7, height: 520 - v[1], 'class': 'b-dn' });
  });
  el('rect', { x: 1058.5, y: 409.5, width: 6, height: 110, 'class': 'box-y' });
  el('rect', { x: 1058, y: 517, width: 7, height: 3, 'class': 'b-red' });

  /* macd histogram [x, end] */
  var hist = [[5,603],[13,607],[21,618],[29,628],[37,630],[46,632],[54,631],[62,632],[70,632],[78,632],[86,622],[95,620],[103,611],[112,625],[119,631],[127,639],[136,641],[144,637],[152,631],[160,632],[168,625],[177,619],[185,613],
    [627,628],[635,620],[643,613],[652,608],[660,602],[676,570],[684,561],[692,557],[701,560],[709,564],[717,573],[725,578],[733,583],[741,586],[750,589],[758,592],[766,590],[774,589],[782,592],[799,596],[807,595],[815,595],[823,597],[832,599],[841,611],[849,618],[857,623],
    [864,623],[872,623],[881,613],[889,614],[897,612],[905,612],[913,611],[922,609],[930,604],[938,598],[946,591],[954,587],[963,587],[971,585],[979,585],[987,589],[995,586],[1004,585],[1012,585],[1021,583],[1028,576],[1036,573],[1044,573],[1053,571],[1061,568]];
  hist.forEach(function (h) { vline(h[0], Math.min(h[1], 593), Math.max(h[1], 593), 'wick ' + (h[1] < 593 ? 'w-up' : 'w-dn')); });

  function poly(cls, pts) { el('polyline', { points: pts, 'class': 'line ' + cls }); }
  /* left price */
  poly('l-g', '5,273 10,271 33,270 50,268 60,265 83,252 110,245 133,241 157,239 187,240');
  poly('l-m', '5,128 14,130 25,134 30,142 37,143 46,146 62,146 70,151 82,160 95,165 110,173 122,187 135,198 145,213 155,228 165,237 175,248 187,259');
  poly('l-y', '5,127 12,131 21,137 29,142 37,143 46,150 54,154 62,171 70,184 78,191 86,197 95,199 103,201 110,204 115,212 122,225 133,240 150,265 160,275 167,290 177,305 185,318 187,318');
  poly('l-w', '5,116 12,114 14,116 21,136 29,158 37,172 46,186 54,195 62,199 70,203 78,210 86,205 95,205 103,202 110,204 115,215 122,230 125,243 130,260 137,287 145,316 152,326 160,326 168,326 177,324 187,322');
  /* main price */
  poly('l-g', '621,224 640,219 665,210 690,200 720,196 750,192 790,190 800,188 820,184 860,183 880,186 900,191 930,196 960,201 990,210 1010,214 1030,217 1050,220 1061,219');
  poly('l-m', '621,175 632,182 645,195 660,206 670,211 680,207 700,207 720,207 727,209 740,205 752,200 765,193 780,187 795,180 810,170 825,165 833,164 845,172 860,187 872,197 885,199 900,206 915,214 930,225 945,234 960,241 975,248 985,255 995,258 1020,257 1030,255 1045,250 1055,246 1061,243');
  poly('l-y', '675,230 690,205 705,190 725,172 740,156 750,155 760,162 775,168 790,172 800,175 820,174 833,175 847,188 860,205 875,222 885,232 900,248 910,257 915,262 925,265 945,265 955,262 965,260 980,261 990,259 1010,254 1020,250 1030,243 1050,235 1061,227');
  poly('l-w', '670,230 673,193 690,167 709,132 720,150 730,167 747,175 760,173 773,170 787,171 807,173 823,176 837,183 847,207 857,230 860,237 872,259 880,259 890,258 900,258 910,264 920,270 930,275 938,275 945,268 955,258 965,250 975,247 980,247 987,253 992,254 1010,255 1020,253 1026,240 1035,232 1045,222 1055,211 1061,200');
  /* volume averages */
  poly('l-y', '5,499 30,501 60,501 80,505 100,505 120,503 150,503 187,506');
  poly('l-m', '5,498 40,498 60,500 80,503 100,505 120,505 150,504 187,505');
  poly('l-y', '621,506 640,505 660,500 672,490 680,485 692,484 710,484 715,490 730,498 745,502 770,504 790,503 830,503 845,505 880,506 910,508 950,510 1000,510 1012,509 1020,505 1028,502 1045,501 1055,500 1060,504');
  poly('l-m', '621,500 640,501 660,504 670,501 685,496 700,493 720,492 740,492 755,494 762,498 790,503 820,503 860,504 880,505 910,507 950,508 1000,509 1020,507 1060,504');
  /* macd lines */
  poly('l-y', '5,540 15,542 30,550 46,560 62,570 80,580 95,585 110,590 125,600 140,612 155,620 170,628 187,634');
  poly('l-w', '5,545 12,548 20,555 29,568 46,578 62,587 70,592 78,597 86,596 103,597 108,596 115,605 125,620 135,630 145,637 155,642 170,644 187,644');
  poly('l-y', '621,600 640,610 660,613 670,612 690,603 710,595 720,591 740,587 770,585 800,585 830,586 845,590 860,598 880,605 900,612 915,617 935,620 950,618 970,615 1000,613 1020,610 1040,605 1060,597');
  poly('l-w', '621,621 640,620 655,619 665,617 670,613 675,605 680,597 690,585 700,580 710,578 720,578 740,582 760,585 790,585 820,587 835,590 845,598 855,607 860,613 880,618 895,620 905,621 915,623 925,620 940,618 950,616 965,613 980,611 990,612 1000,609 1015,608 1020,606 1030,600 1040,595 1055,590 1061,584');

  /* crosses */
  [[22, 38], [153, 38], [685, 36], [873, 36], [1021, 36]].forEach(function (p) {
    el('path', { d: 'M' + (p[0] - 2) + ' ' + (p[1] - 2) + 'l4 4m0-4l-4 4', stroke: '#ff00ff', fill: 'none' });
  });
})();
```
